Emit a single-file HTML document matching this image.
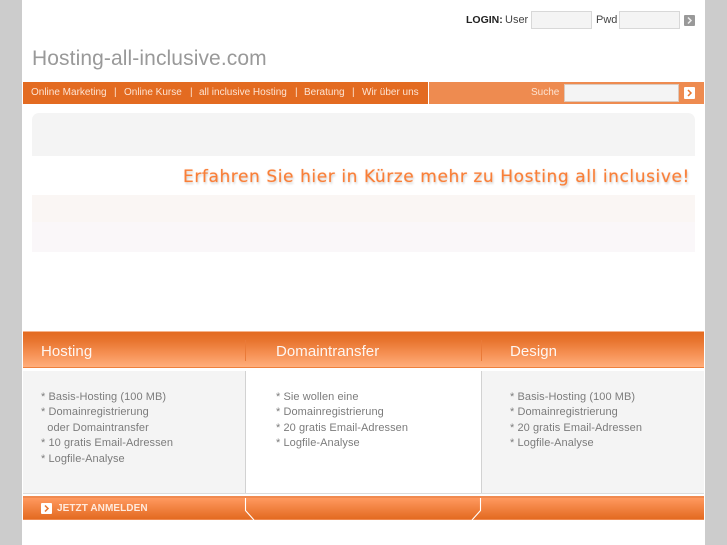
<!DOCTYPE html>
<html><head><meta charset="utf-8"><style>
html,body{margin:0;padding:0;background:#fff}
body{width:727px;height:545px;position:relative;overflow:hidden;font-family:"Liberation Sans",Arial,sans-serif}
div,span{position:absolute;white-space:nowrap}
.g{background:#ccc;top:0;height:545px;width:22px}
.lb{font-size:11px;color:#444;line-height:14px;top:13px}
.in{background:#f4f4f4;border:1px solid #d8d8d8;box-sizing:border-box}
.nav{font-size:10px;color:#fde3d2;line-height:14px;top:86px}
.h{top:343px;font-size:15px;line-height:18px;color:#fff;opacity:.92;letter-spacing:.05px}
.t{font-size:11px;line-height:15.4px;color:#7c7c7c;top:390px;white-space:pre;letter-spacing:.07px}
.ar{width:11px;height:11px;border-radius:1px}
.ar svg{position:absolute;left:0;top:0}
</style></head><body>
<div class="g" style="left:0"></div><div class="g" style="left:705px"></div>

<div class="lb" style="left:466px;color:#222;font-weight:bold;font-size:10.5px">LOGIN:</div>
<div class="lb" style="left:505px">User</div>
<div class="in" style="left:531px;top:11px;width:61px;height:18px"></div>
<div class="lb" style="left:596px">Pwd</div>
<div class="in" style="left:619px;top:11px;width:61px;height:18px"></div>
<div class="ar" style="left:684px;top:15px;background:#999"><svg width="11" height="11"><path d="M4 2.5L7 5.5L4 8.5" fill="none" stroke="#eee" stroke-width="1.5"/></svg></div>

<div style="left:32px;top:46px;font-size:21px;line-height:26px;color:#999;letter-spacing:.1px">Hosting-all-inclusive.com</div>

<div style="left:23px;top:82px;width:405px;height:22px;background:#e36b21"></div>
<div style="left:429px;top:82px;width:275px;height:22px;background:#ee8b50"></div>
<div class="nav" style="left:31px">Online Marketing</div>
<div class="nav" style="left:114px">|</div>
<div class="nav" style="left:124px">Online Kurse</div>
<div class="nav" style="left:190px">|</div>
<div class="nav" style="left:199px">all inclusive Hosting</div>
<div class="nav" style="left:295px">|</div>
<div class="nav" style="left:304px">Beratung</div>
<div class="nav" style="left:352px">|</div>
<div class="nav" style="left:362px">Wir über uns</div>
<div class="nav" style="left:531px">Suche</div>
<div class="in" style="left:564px;top:84px;width:115px;height:18px;border-color:#dcc9bd"></div>
<div class="ar" style="left:684px;top:87px;background:#fff;height:12px"><svg width="11" height="12"><path d="M4 3L7 6L4 9" fill="none" stroke="#e8762f" stroke-width="1.5"/></svg></div>

<div style="left:32px;top:113px;width:663px;height:43px;background:#f4f4f4;border-radius:7px 7px 0 0"></div>
<div style="left:183px;top:166px;font-family:'DejaVu Sans',Verdana,sans-serif;font-size:17px;line-height:22px;color:#f97f38;letter-spacing:.58px;text-shadow:0 0 1px rgba(249,127,56,.6),1px 2px 2px rgba(0,0,0,.18)">Erfahren Sie hier in Kürze mehr zu Hosting all inclusive!</div>
<div style="left:32px;top:195px;width:663px;height:27px;background:#faf6f4"></div>
<div style="left:32px;top:222px;width:663px;height:30px;background:#faf7f9"></div>

<div style="left:23px;top:331px;width:681px;height:1px;background:#f7b48c"></div>
<div style="left:23px;top:332px;width:681px;height:35px;background:linear-gradient(#e36a20 0%,#e8752f 25%,#f58f52 60%,#ffae7c 100%)"></div>
<div style="left:23px;top:367px;width:681px;height:1px;background:#ee803d"></div>
<div style="left:245px;top:340px;width:1px;height:21px;background:#ea7a38"></div>
<div style="left:481px;top:340px;width:1px;height:21px;background:#ea7a38"></div>
<div class="h" style="left:41px">Hosting</div>
<div class="h" style="left:276px">Domaintransfer</div>
<div class="h" style="left:510px">Design</div>

<div style="left:23px;top:371px;width:222px;height:122px;background:#f4f4f4"></div>
<div style="left:482px;top:371px;width:222px;height:122px;background:#f4f4f4"></div>
<div style="left:245px;top:371px;width:1px;height:122px;background:#d2d2d2"></div>
<div style="left:481px;top:371px;width:1px;height:122px;background:#d2d2d2"></div>
<div style="left:23px;top:493px;width:681px;height:1px;background:#dcdcdc"></div>

<div class="t" style="left:41px">* Basis-Hosting (100 MB)
* Domainregistrierung
  oder Domaintransfer
* 10 gratis Email-Adressen
* Logfile-Analyse</div>
<div class="t" style="left:276px">* Sie wollen eine
* Domainregistrierung
* 20 gratis Email-Adressen
* Logfile-Analyse</div>
<div class="t" style="left:510px">* Basis-Hosting (100 MB)
* Domainregistrierung
* 20 gratis Email-Adressen
* Logfile-Analyse</div>

<div style="left:23px;top:496px;width:681px;height:2px;background:#f08a50"></div>
<div style="left:23px;top:498px;width:681px;height:21px;background:linear-gradient(#ff995f,#e36a20)"></div>
<div style="left:23px;top:519px;width:681px;height:1px;background:#ee8a50"></div>
<svg style="position:absolute;left:240px;top:496px" width="250" height="25"><path d="M5.5 2V14.5L14 24M240.5 2V14.5L232 24" fill="none" stroke="#fff" stroke-width="1.1"/></svg>
<div class="ar" style="left:41px;top:503px;background:#fff"><svg width="11" height="11"><path d="M4 2.5L7 5.5L4 8.5" fill="none" stroke="#e8762f" stroke-width="1.5"/></svg></div>
<div style="left:57px;top:502px;font-size:10px;line-height:14px;font-weight:bold;color:#ffeadd;letter-spacing:.07px">JETZT ANMELDEN</div>
</body></html>
